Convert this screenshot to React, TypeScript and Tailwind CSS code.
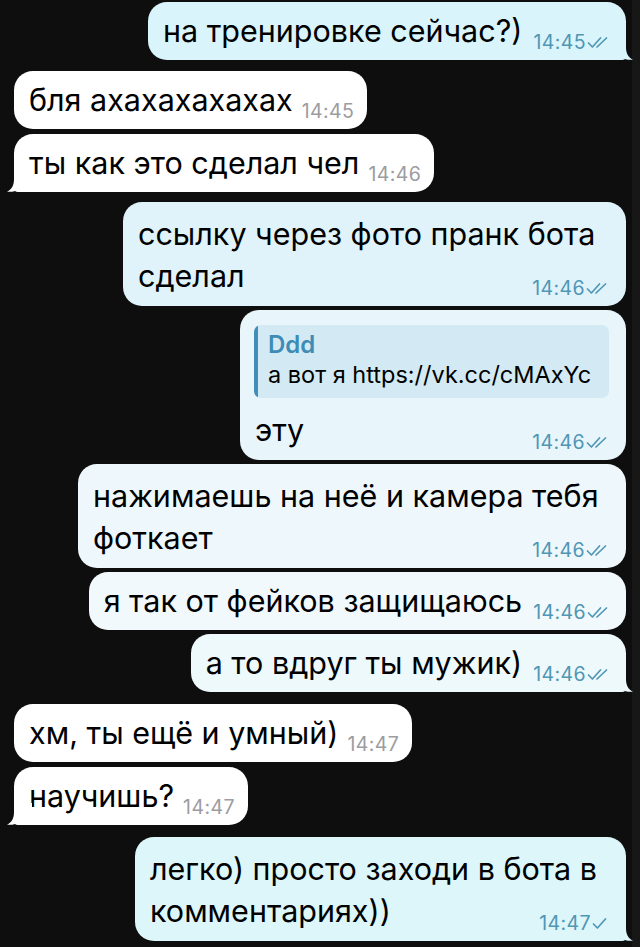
import React from 'react';

type Side = 'in' | 'out';

const Checks: React.FC<{ double?: boolean }> = ({ double }) => (
    <svg width={double ? 22 : 16} height="13" viewBox={double ? '0 0 22 13' : '0 0 16 13'} fill="none" stroke="#4f97b5" strokeWidth="1.7" strokeLinecap="round" strokeLinejoin="round">
        <path d="M1.5 7 L5.4 11 L13.5 2" />
        {double && <path d="M10 11 L19.5 2" />}
    </svg>
);

const Tail: React.FC<{ side: Side; color: string }> = ({ side, color }) => (
    <svg
        width="26"
        height="22"
        viewBox="0 0 26 22"
        className={side === 'out' ? 'absolute bottom-0 right-[-8px]' : 'absolute bottom-0 left-[-8px] -scale-x-100'}
    >
        <path d="M0 0 H18 V9 C18 15 20 19.5 25 21.6 C21 22.3 17 21.6 14.2 19.8 C11 21.6 7 22 0 22 Z" fill={color} />
    </svg>
);

const Time: React.FC<{ side: Side; time: string; checks?: 'one' | 'two' }> = ({ side, time, checks }) => (
    <span className={`inline-flex items-center gap-[1px] text-[19.5px] tracking-[0.4px] leading-[22px] whitespace-nowrap ${side === 'out' ? 'text-[#4f97b5]' : 'text-[#9c9ca1]'}`}>
        {time}
        {checks && <Checks double={checks === 'two'} />}
    </span>
);

interface BubbleProps {
    side: Side;
    lines: string[];
    time: string;
    checks?: 'one' | 'two';
    tail?: boolean;
    bg: string;
    width?: string;
    gap: string;
    reply?: { name: string; text: string };
}

const Bubble: React.FC<BubbleProps> = ({ side, lines, time, checks, tail, bg, width, gap, reply }) => {
    const corner = tail ? (side === 'out' ? 'rounded-br-[4px]' : 'rounded-bl-[4px]') : '';
    const align = side === 'out' ? 'self-end' : 'self-start';
    const multi = lines.length > 1 || reply;

    return (
        <div className={`relative ${align} ${gap} ${width ?? ''} rounded-[19px] ${corner} text-black`} style={{ backgroundColor: bg }}>
            {multi ? (
                <div className={`flex flex-col pl-[15px] pr-[18px] pb-[7px] ${reply ? 'pt-[15px]' : 'pt-[11px]'}`}>
                    {reply && (
                        <div className="mb-[11px] flex rounded-[7px] bg-[#d3eaf4] overflow-hidden -ml-[1px] -mr-[1px]">
                            <div className="w-[4px] bg-[#3f8fb9]" />
                            <div className="flex flex-col pl-[10px] pr-[8px] pt-[4px] pb-[8px]">
                                <span className="text-[24px] leading-[31px] font-semibold text-[#3d8cb5]">{reply.name}</span>
                                <span className="text-[23.5px] leading-[30px] whitespace-nowrap">{reply.text}</span>
                            </div>
                        </div>
                    )}
                    <div className="text-[30.5px] leading-[42px]">
                        {lines.map((l, i) => (
                            <div key={i} className="whitespace-nowrap">{l}</div>
                        ))}
                    </div>
                    <div className="-mt-[20px] flex justify-end">
                        <Time side={side} time={time} checks={checks} />
                    </div>
                </div>
            ) : (
                <div className={`flex h-[58px] items-start pt-[9px] pl-[15px] ${side === 'out' ? 'pr-[17px]' : 'pr-[13px]'}`}>
                    <span className="text-[30.5px] leading-[40px] whitespace-nowrap">{lines[0]}</span>
                    <span className={`self-end mb-[5px] ${side === 'out' ? 'ml-[11px]' : 'ml-[9px]'}`}>
                        <Time side={side} time={time} checks={checks} />
                    </span>
                </div>
            )}
            {tail && <Tail side={side} color={bg} />}
        </div>
    );
};

const App: React.FC = () => {
    return (
        <div className="flex w-[640px] h-[947px] overflow-hidden bg-[#0e0e0e] font-[Inter,'Noto_Sans',sans-serif]">
            <main className="flex flex-1 flex-col pl-[14px] pr-[6px]">
                <Bubble side="out" gap="mt-[2px]" bg="#daf4fb" lines={['на тренировке сейчас?)']} time="14:45" checks="two" tail />
                <Bubble side="in" gap="mt-[11px]" bg="#ffffff" lines={['бля ахахахахахах']} time="14:45" />
                <Bubble side="in" gap="mt-[5px]" bg="#ffffff" lines={['ты как это сделал чел']} time="14:46" tail />
                <Bubble side="out" gap="mt-[10px]" width="w-[503px]" bg="#e0f3fb" lines={['ссылку через фото пранк бота', 'сделал']} time="14:46" checks="two" />
                <Bubble
                    side="out"
                    gap="mt-[4px]"
                    width="w-[386px]"
                    bg="#e8f5fb"
                    lines={['эту']}
                    reply={{ name: 'Ddd', text: 'а вот я https://vk.cc/cMAxYc' }}
                    time="14:46"
                    checks="two"
                />
                <Bubble side="out" gap="mt-[4px]" width="w-[548px]" bg="#eef8fc" lines={['нажимаешь на неё и камера тебя', 'фоткает']} time="14:46" checks="two" />
                <Bubble side="out" gap="mt-[4px]" bg="#f1f9fc" lines={['я так от фейков защищаюсь']} time="14:46" checks="two" />
                <Bubble side="out" gap="mt-[4px]" bg="#eef9fc" lines={['а то вдруг ты мужик)']} time="14:46" checks="two" tail />
                <Bubble side="in" gap="mt-[12px]" bg="#ffffff" lines={['хм, ты ещё и умный)']} time="14:47" />
                <Bubble side="in" gap="mt-[5px]" bg="#ffffff" lines={['научишь?']} time="14:47" tail />
                <Bubble side="out" gap="mt-[12px]" width="w-[491px]" bg="#dcf6fa" lines={['легко) просто заходи в бота в', 'комментариях))']} time="14:47" checks="one" tail />
            </main>
            <div className="w-[8px] bg-[#171717]" />
        </div>
    );
};

export default App;
